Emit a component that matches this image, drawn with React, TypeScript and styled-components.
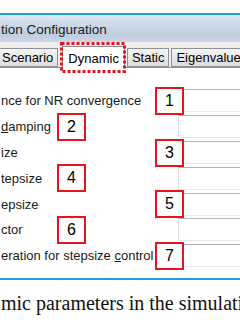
import React from 'react';
import styled, { createGlobalStyle } from 'styled-components';

const GlobalStyle = createGlobalStyle`
  html, body {
    margin: 0;
    background: #ffffff;
  }
  body {
    width: 240px;
    height: 320px;
    overflow: hidden;
    font-family: "Liberation Sans", Arial, sans-serif;
  }
`;

const Page = styled.div`
  width: 240px;
  height: 320px;
  overflow: hidden;
  padding-top: 13px;
  box-sizing: border-box;
`;

const BlueRule = styled.div`
  height: 2px;
  background: #1f9fd9;
`;

const TitleBar = styled.div`
  height: 27px;
  display: flex;
  align-items: flex-end;
  padding: 0 0 4px 1px;
  box-sizing: border-box;
  background: linear-gradient(180deg, #dfe8f3 0%, #cbd8e7 40%, #bfcddf 75%, #ccd8e6 100%);
  font-size: 13.5px;
  line-height: 16px;
  color: #1b1b1b;
  white-space: nowrap;
`;

const TabStrip = styled.div`
  height: 26px;
  display: flex;
  align-items: flex-end;
  background: #eeeeee;
  border-bottom: 1px solid #8e9199;
  box-sizing: border-box;
  white-space: nowrap;
`;

const Tab = styled.div<{ $active?: boolean; $gap?: number }>`
  position: relative;
  margin-left: ${(p) => p.$gap ?? 0}px;
  margin-bottom: ${(p) => (p.$active ? -1 : 0)}px;
  height: ${(p) => (p.$active ? 22 : 19)}px;
  padding: 0 ${(p) => (p.$active ? 5 : 4)}px ${(p) => (p.$active ? 2 : 1)}px;
  box-sizing: border-box;
  display: flex;
  align-items: flex-end;
  border: 1px solid #8e9199;
  border-bottom: ${(p) => (p.$active ? 'none' : '1px solid #8e9199')};
  background: ${(p) => (p.$active ? '#ffffff' : 'linear-gradient(180deg, #f4f4f4 0%, #e9e9e9 50%, #dcdcdc 100%)')};
  font-size: 13px;
  line-height: 15px;
  color: #000;
`;

const DottedMark = styled.svg`
  position: absolute;
  left: -3px;
  top: -5px;
  overflow: visible;
`;

const Content = styled.div`
  height: 210px;
  padding-top: 20px;
  box-sizing: border-box;
  background: #ffffff;
`;

const Row = styled.div`
  position: relative;
  display: grid;
  grid-template-columns: 178px 1fr;
  align-items: center;
  height: 25.8px;
`;

const Label = styled.div`
  padding-left: 1px;
  font-size: 13px;
  color: #1a1a1a;
  white-space: nowrap;
`;

const Field = styled.div`
  height: 23px;
  margin-right: -20px;
  box-sizing: border-box;
  background: #ffffff;
  border: 1px solid;
  border-color: #b3b5bb #dfe2e8 #e6e9ee #e2e3ea;
`;

const Marker = styled.div<{ $left: number }>`
  position: absolute;
  left: ${(p) => p.$left}px;
  top: calc(50% - 14px);
  width: 29px;
  height: 28px;
  box-sizing: border-box;
  border: 2px solid #e8141b;
  background: #ffffff;
  display: flex;
  align-items: center;
  justify-content: center;
  font-size: 16px;
  color: #000;
`;

const Caption = styled.div`
  margin-top: 11px;
  padding-left: 1px;
  font-family: "Liberation Serif", "Times New Roman", serif;
  font-size: 20px;
  line-height: 24px;
  color: #111;
  white-space: nowrap;
`;

const rows: { label: React.ReactNode; n: number; left: number }[] = [
  { label: 'nce for NR convergence', n: 1, left: 155 },
  { label: <><u>d</u>amping</>, n: 2, left: 57 },
  { label: 'ize', n: 3, left: 155 },
  { label: 'tepsize', n: 4, left: 57 },
  { label: 'epsize', n: 5, left: 155 },
  { label: 'ctor', n: 6, left: 57 },
  { label: <>eration for stepsize <u>c</u>ontrol</>, n: 7, left: 155 },
];

export default function App() {
  return (
    <>
      <GlobalStyle />
      <Page>
        <BlueRule />
        <TitleBar>tion Configuration</TitleBar>
        <TabStrip>
          <Tab $gap={-3}>Scenario</Tab>
          <Tab $active $gap={4}>
            Dynamic
            <DottedMark width="66" height="31">
              <rect x="1.5" y="1.5" width="63" height="28" fill="none" stroke="#e8141b" strokeWidth="3" strokeDasharray="3 2" />
            </DottedMark>
          </Tab>
          <Tab $gap={2}>Static</Tab>
          <Tab $gap={2}>Eigenvalue</Tab>
        </TabStrip>
        <Content>
          {rows.map((r) => (
            <Row key={r.n}>
              <Label>{r.label}</Label>
              <Field />
              <Marker $left={r.left}>{r.n}</Marker>
            </Row>
          ))}
        </Content>
        <BlueRule />
        <Caption>mic parameters in the simulati</Caption>
      </Page>
    </>
  );
}
